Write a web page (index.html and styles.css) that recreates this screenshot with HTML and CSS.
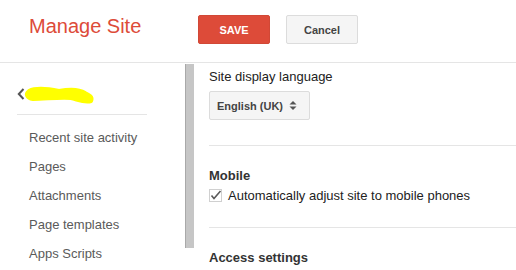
FILE: index.html
```html
<!DOCTYPE html>
<html>
<head>
<meta charset="utf-8">
<link rel="stylesheet" href="styles.css">
</head>
<body>
<div class="header">
  <div class="title">Manage Site</div>
  <div class="actions">
    <button class="btn btn-save">SAVE</button>
    <button class="btn btn-cancel">Cancel</button>
  </div>
</div>
<div class="body">
  <div class="sidebar">
    <div class="back-row">
      <svg class="chevron" width="8" height="12" viewBox="0 0 8 12"><path d="M6.5 1 L1.8 6 L6.5 11" fill="none" stroke="#555" stroke-width="2"/></svg>
      <svg class="redact" width="74" height="22" viewBox="0 0 74 22"><path d="M6 8 C14 4 26 6 36 8 C46 6 56 6 62 10 C66 12 70 14 68 18 C62 20 56 17 48 15 C36 14 22 16 10 16 C4 15 2 11 6 8 Z" fill="#ffff00" stroke="#ffff00" stroke-width="4" stroke-linejoin="round"/></svg>
    </div>
    <ul class="nav">
      <li>Recent site activity</li>
      <li>Pages</li>
      <li>Attachments</li>
      <li>Page templates</li>
      <li>Apps Scripts</li>
    </ul>
  </div>
  <div class="scrollbar"></div>
  <div class="main">
    <div class="section first">
      <div class="label">Site display language</div>
      <div class="select">
        <span>English (UK)</span>
        <svg class="updown" width="8" height="11" viewBox="0 0 8 11"><path d="M0.5 4.5 L4 1 L7.5 4.5 Z" fill="#555"/><path d="M0.5 6.5 L4 10 L7.5 6.5 Z" fill="#555"/></svg>
      </div>
    </div>
    <div class="section">
      <div class="heading">Mobile</div>
      <div class="check-row">
        <svg class="checkbox" width="13" height="13" viewBox="0 0 13 13"><rect x="0.5" y="0.5" width="12" height="12" fill="#fff" stroke="#d0d0d0"/><path d="M2.5 6.5 L5 9.5 L11.5 2" fill="none" stroke="#5a5a5a" stroke-width="1.6"/></svg>
        <span>Automatically adjust site to mobile phones</span>
      </div>
    </div>
    <div class="section last">
      <div class="heading">Access settings</div>
    </div>
  </div>
</div>
</body>
</html>
```

FILE: styles.css
```css
html, body {
  margin: 0;
  padding: 0;
  background: #fff;
  overflow: hidden;
}
body {
  width: 516px;
  height: 270px;
  font-family: "Liberation Sans", Arial, sans-serif;
  color: #222;
}
.header {
  display: flex;
  align-items: flex-start;
  height: 62px;
  border-bottom: 1px solid #e5e5e5;
  padding-left: 29px;
  box-sizing: content-box;
}
.title {
  flex: none;
  width: 169px;
  margin-top: 12px;
  font-size: 20px;
  line-height: 28px;
  color: #dd4b39;
}
.actions {
  display: flex;
  gap: 16px;
  margin-top: 15px;
}
.btn {
  width: 72px;
  height: 29px;
  border-radius: 2px;
  font-family: inherit;
  font-weight: bold;
  font-size: 11px;
  padding: 0;
  margin: 0;
}
.btn-save {
  background: #dd4b39;
  border: 1px solid #d14836;
  color: #fff;
}
.btn-cancel {
  background: #f5f5f5;
  border: 1px solid #dcdcdc;
  color: #444;
}
.body {
  display: flex;
  align-items: flex-start;
}
.sidebar {
  flex: none;
  width: 185px;
  padding-left: 17px;
  box-sizing: border-box;
}
.back-row {
  display: flex;
  align-items: center;
  height: 41px;
  margin-top: 10px;
  width: 130px;
  border-bottom: 1px solid #e5e5e5;
  box-sizing: content-box;
}
.chevron {
  display: block;
}
.redact {
  display: block;
  margin-left: -2px;
  margin-top: 1px;
}
.nav {
  list-style: none;
  margin: 8px 0 0 0;
  padding: 0 0 0 12px;
}
.nav li {
  font-size: 13px;
  line-height: 29px;
  color: #5a5a5a;
  white-space: nowrap;
}
.scrollbar {
  flex: none;
  width: 8px;
  height: 184px;
  margin-top: 1px;
  background: #c6c6c6;
  border-left: 1px solid #a9a9a9;
}
.main {
  flex: 1;
  padding-left: 15px;
}
.section {
  border-bottom: 1px solid #e5e5e5;
  padding: 20px 0 22px 0;
}
.section.first {
  padding-top: 4px;
  padding-bottom: 25px;
}
.section.last {
  border-bottom: none;
}
.label {
  font-size: 13px;
  line-height: 19px;
  color: #222;
  margin-bottom: 5px;
}
.select {
  display: flex;
  align-items: center;
  justify-content: space-between;
  width: 101px;
  height: 29px;
  box-sizing: border-box;
  padding: 0 12px 0 7px;
  background: #f5f5f5;
  border: 1px solid #dcdcdc;
  border-radius: 2px;
  font-size: 11px;
  font-weight: bold;
  color: #444;
}
.updown {
  display: block;
}
.heading {
  font-size: 13px;
  line-height: 19px;
  font-weight: bold;
  color: #333;
}
.check-row {
  display: flex;
  align-items: center;
  gap: 6px;
  height: 20px;
  font-size: 13px;
  color: #222;
  white-space: nowrap;
}
.checkbox {
  display: block;
  flex: none;
}
```
